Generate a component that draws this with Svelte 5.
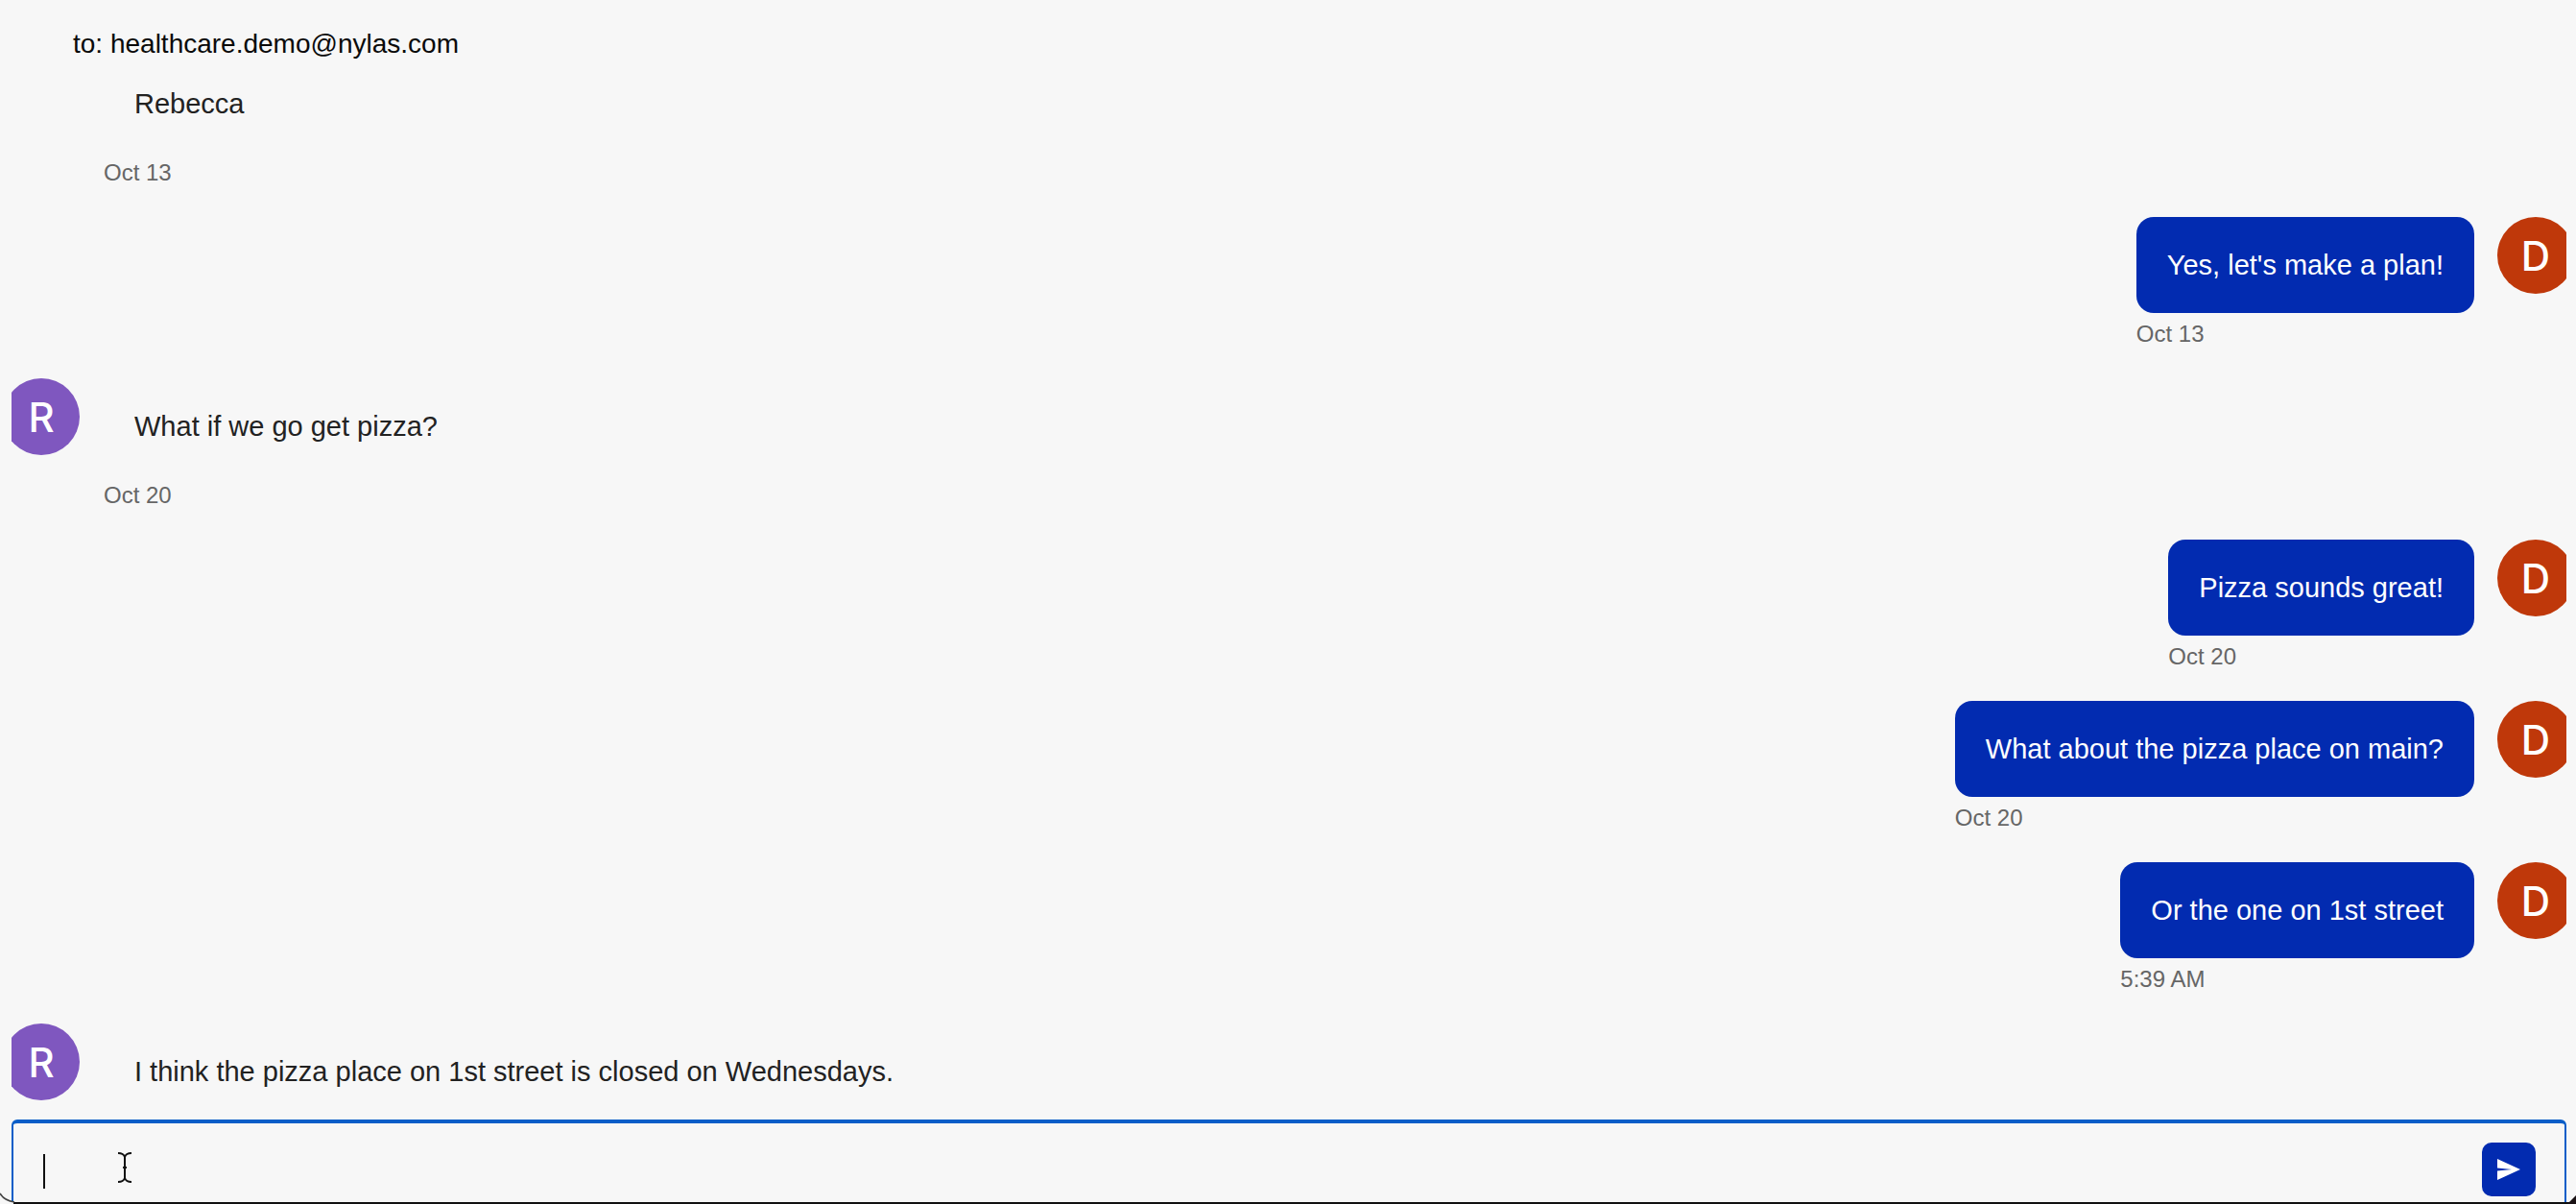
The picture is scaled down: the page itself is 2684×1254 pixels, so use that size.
<script>
const messages = [
  { from: "them", text: "Rebecca", date: "Oct 13", hideAvatar: true },
  { from: "me", text: "Yes, let's make a plan!", date: "Oct 13" },
  { from: "them", text: "What if we go get pizza?", date: "Oct 20" },
  { from: "me", text: "Pizza sounds great!", date: "Oct 20" },
  { from: "me", text: "What about the pizza place on main?", date: "Oct 20" },
  { from: "me", text: "Or the one on 1st street", date: "5:39 AM" },
  { from: "them", text: "I think the pizza place on 1st street is closed on Wednesdays.", date: "" }
];
</script>

<div class="page">
  <div class="frame">
    <header>to: healthcare.demo@nylas.com</header>

    <section class="thread">
      {#each messages as m}
        <div class="row {m.from}">
          {#if m.from === "them"}
            <div class="avatar r" class:hidden={m.hideAvatar}>R</div>
          {/if}
          <div class="body">
            <div class="bubble">{m.text}</div>
            {#if m.date}<div class="date">{m.date}</div>{/if}
          </div>
          {#if m.from === "me"}
            <div class="avatar d">D</div>
          {/if}
        </div>
      {/each}
    </section>

    <form class="composer">
      <span class="caret"></span>
      <svg class="ibeam" width="14" height="32" viewBox="0 0 14 32" fill="none" stroke="#111" stroke-width="2">
        <path d="M0 1c4 0 6 1 7 4 1-3 3-4 7-4M7 5v22M0 31c4 0 6-1 7-4 1 3 3 4 7 4M5 16h4"/>
      </svg>
      <button type="button" class="send" aria-label="Send">
        <svg width="24" height="22" viewBox="0 0 24 22"><path d="M0 0l24 11L0 22v-9.500l15-1.500-15-1.500z" fill="#fff"/></svg>
      </button>
    </form>
  </div>

  <!-- window edge caught in the capture -->
  <div class="edge"></div>
  <svg class="corner left" width="16" height="12" viewBox="0 0 16 12" fill="none" stroke="#444" stroke-width="1.500">
    <path d="M0 1c3 5 8 8 15 9"/>
  </svg>
  <svg class="corner right" width="9" height="9" viewBox="0 0 9 9"><path d="M9 0v9H0z" fill="#1a1214"/></svg>
</div>

<style>
:global(body) {
  margin: 0;
  background: #f7f7f7;
  font-family: "Liberation Sans", Arial, sans-serif;
}

.page {
  position: relative;
  width: 2684px;
  height: 1254px;
  overflow: hidden;
}

.frame {
  position: relative;
  width: 2662px;
  height: 1254px;
  margin-left: 12px;
  overflow: hidden;
}

header {
  height: 58px;
  padding: 30px 0 0 64px;
  box-sizing: border-box;
  font-size: 28px;
  line-height: 32px;
  color: #0a0a0a;
}

.thread {
  height: 1108px;
  overflow: hidden;
}

.row {
  display: flex;
  gap: 25px;
  height: 168px;
}
.row.me {
  justify-content: flex-end;
  gap: 24px;
  margin-right: -8px;
}
.row.them {
  margin-left: -9px;
}

.avatar {
  flex: none;
  width: 80px;
  height: 80px;
  border-radius: 50%;
  display: flex;
  align-items: center;
  justify-content: center;
  color: #fff;
  font-family: Inter, "Liberation Sans", sans-serif;
  font-weight: 500;
  font-size: 42px;
}
.avatar.r { background: #7f57bf; }
.avatar.d { background: #bf380a; }
.avatar.hidden { visibility: hidden; }

.bubble {
  height: 100px;
  padding: 0 32px;
  display: flex;
  align-items: center;
  box-sizing: border-box;
  border-radius: 18px;
  font-size: 29px;
  color: #222;
}
.me .bubble {
  background: #022bb0;
  color: #fff;
}

.date {
  margin-top: 8px;
  font-size: 24px;
  line-height: 28px;
  color: #666;
}

.composer {
  position: absolute;
  left: 0;
  right: 0;
  top: 1166px;
  height: 86px;
  box-sizing: border-box;
  border: 2px solid #0a5ec8;
  border-top-width: 4px;
  border-bottom: none;
  border-radius: 6px 6px 0 0;
  background: #f7f7f7;
  display: flex;
  align-items: flex-start;
  justify-content: flex-end;
  padding: 20px 30px 0 0;
}

.caret {
  position: absolute;
  left: 31px;
  top: 32px;
  width: 2px;
  height: 36px;
  background: #111;
}
.ibeam {
  position: absolute;
  left: 109px;
  top: 30px;
}

.send {
  width: 56px;
  height: 56px;
  padding: 0;
  border: none;
  border-radius: 10px;
  background: #022bb0;
  display: flex;
  align-items: center;
  justify-content: center;
}

.edge {
  position: absolute;
  left: 14px;
  right: 0;
  bottom: 0;
  height: 2px;
  background: #111;
}
.corner {
  position: absolute;
  bottom: 0;
}
.corner.left { left: 0; }
.corner.right { right: 0; }
</style>
